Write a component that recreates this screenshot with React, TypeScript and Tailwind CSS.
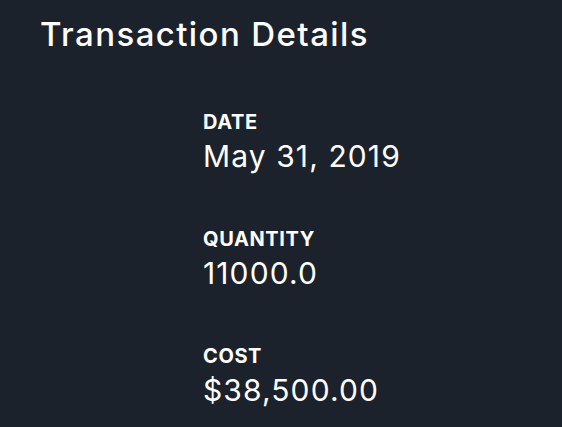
export default function App() {
  const items = [
    { label: "DATE", value: "May 31, 2019" },
    { label: "QUANTITY", value: "11000.0" },
    { label: "COST", value: "$38,500.00" },
  ];
  return (
    <div
      className="w-[562px] h-[427px] bg-[#1c222b] text-white overflow-hidden"
      style={{ fontFamily: "Inter, 'Noto Sans', sans-serif" }}
    >
      <div className="pl-[40px] pt-[18px] text-[33px] leading-[33px] font-medium tracking-[1.4px]">
        Transaction Details
      </div>
      <div className="pl-[203px] pt-[61px] flex flex-col gap-[58px]">
        {items.map((it) => (
          <div key={it.label} className="flex flex-col gap-[9px]">
            <div className="text-[20px] leading-[20px] font-bold tracking-[0.6px]">{it.label}</div>
            <div className="text-[30px] leading-[30px] tracking-[1.1px]">{it.value}</div>
          </div>
        ))}
      </div>
    </div>
  );
}
